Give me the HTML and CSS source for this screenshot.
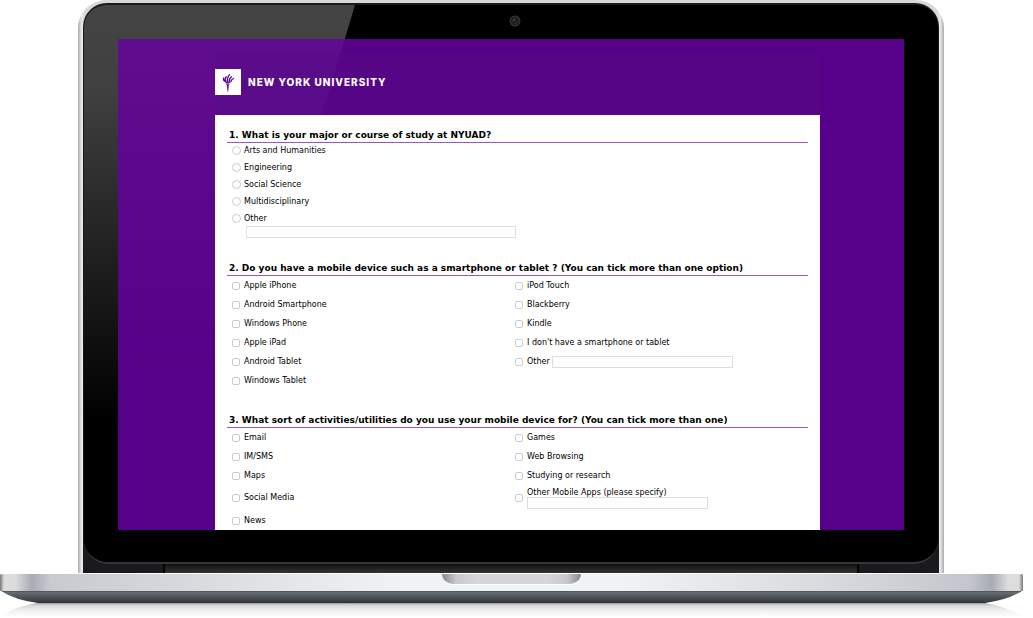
FILE: index.html
```html
<!DOCTYPE html>
<html lang="en">
<head>
<meta charset="utf-8">
<meta name="viewport" content="width=device-width, initial-scale=1">
<title>New York University survey</title>
<link rel="stylesheet" href="styles.css">
</head>
<body>
<div class="laptop">
  <div class="lid">
    <div class="shell">
      <div class="glass">
        <div class="camera-bar">
          <svg class="camera" viewBox="0 0 12 12" aria-hidden="true"><circle cx="6" cy="6" r="5.500" fill="#333"/><circle cx="6" cy="6" r="4" fill="#1c1c1e"/><circle cx="6" cy="6" r="2.600" fill="#2c3034"/><circle cx="6" cy="6" r="1.700" fill="#08080c"/><circle cx="5.300" cy="5.200" r=".8" fill="#5d7f96"/><circle cx="6.800" cy="7" r=".6" fill="#3a5568"/></svg>
        </div>
        <main class="screen">
          <form class="page">
            <header class="brand">
              <svg class="torch" viewBox="0 0 26 26" aria-hidden="true">
                <path fill="#fff" d="M0 0h26v26H0z"/>
                <path fill="#57068c" d="M11 14.500h3.600l-.4 1.200h-2.800zM11.800 16h2l-.6 6.500h-.7zM8.800 11.500q1.200 1.400 3.800 1.700 2.800 0 4.700-1.700-1.200 2.600-4.500 2.700-3-.1-4-2.700z"/>
                <g fill="none" stroke="#57068c" stroke-width="1.300" stroke-linecap="round"><path d="M9.300 12q-1.600-1.400-.6-3M11 12.500q-1.900-2.300.2-4.900M12.800 12.700q-1.300-3 1.700-7M14.500 12.500q-.7-2.500 2-4.700M16.200 12q-.1-1.400 2.200-2.500"/></g>
              </svg>
              <span class="wordmark">NEW YORK UNIVERSITY</span>
            </header>
            <div class="sheet">
              <fieldset class="question">
                <legend>1. What is your major or course of study at NYUAD?</legend>
                <div class="radios">
                  <label><input type="radio" name="major">Arts and Humanities</label>
                  <label><input type="radio" name="major">Engineering</label>
                  <label><input type="radio" name="major">Social Science</label>
                  <label><input type="radio" name="major">Multidisciplinary</label>
                  <label><input type="radio" name="major">Other</label>
                </div>
                <input class="text major-other" type="text" aria-label="Other major">
              </fieldset>
              <fieldset class="question">
                <legend>2. Do you have a mobile device such as a smartphone or tablet ? (You can tick more than one option)</legend>
                <div class="checks">
                  <label><input type="checkbox">Apple iPhone</label>
                  <label><input type="checkbox">iPod Touch</label>
                  <label><input type="checkbox">Android Smartphone</label>
                  <label><input type="checkbox">Blackberry</label>
                  <label><input type="checkbox">Windows Phone</label>
                  <label><input type="checkbox">Kindle</label>
                  <label><input type="checkbox">Apple iPad</label>
                  <label><input type="checkbox">I don't have a smartphone or tablet</label>
                  <label><input type="checkbox">Android Tablet</label>
                  <div class="inline-other"><label><input type="checkbox">Other</label><input class="text" type="text" aria-label="Other device"></div>
                  <label><input type="checkbox">Windows Tablet</label>
                </div>
              </fieldset>
              <fieldset class="question">
                <legend>3. What sort of activities/utilities do you use your mobile device for? (You can tick more than one)</legend>
                <div class="checks">
                  <label><input type="checkbox">Email</label>
                  <label><input type="checkbox">Games</label>
                  <label><input type="checkbox">IM/SMS</label>
                  <label><input type="checkbox">Web Browsing</label>
                  <label><input type="checkbox">Maps</label>
                  <label><input type="checkbox">Studying or research</label>
                  <label><input type="checkbox">Social Media</label>
                  <div class="stacked-other"><input type="checkbox" id="apps"><div class="stack"><label for="apps">Other Mobile Apps (please specify)</label><input class="text" type="text" aria-label="Other mobile apps"></div></div>
                  <label><input type="checkbox">News</label>
                </div>
              </fieldset>
            </div>
          </form>
        </main>
      </div>
      <div class="hinge"></div>
    </div>
  </div>
  <div class="base"><div class="notch"></div></div>
  <svg class="underside" viewBox="0 0 1023 45" preserveAspectRatio="none" aria-hidden="true">
    <defs>
      <linearGradient id="under" x2="0" y2="1"><stop offset="0" stop-color="#485155"/><stop offset=".15" stop-color="#667075"/><stop offset=".3" stop-color="#596167"/><stop offset=".85" stop-color="#3c3f45"/><stop offset="1" stop-color="#2c2e32"/></linearGradient>
      <linearGradient id="reflection" x2="0" y2="1"><stop offset="0" stop-color="#999"/><stop offset=".15" stop-color="#d6d6d6"/><stop offset=".5" stop-color="#efefef"/><stop offset="1" stop-color="#fff"/></linearGradient>
    </defs>
    <path fill="url(#reflection)" d="M38 12H985Q1008 16 1022 26H1Q12 16 38 12z"/>
    <path fill="url(#under)" d="M1 0H1022Q1008 9 985 12H38Q15 9 1 0z"/>
    <path fill="#2f3237" d="M346 12q5-3 10 0zM667 12q5-3 10 0z"/>
  </svg>
</div>
</body>
</html>
```
FILE: styles.css
```css
* { box-sizing: border-box; }
body {
  margin: 0;
  background: #fff;
  color: #000;
  font: 8px/12px Verdana, "DejaVu Sans", sans-serif;
  overflow: hidden;
}
.laptop { padding-right: 10px; }
.lid {
  margin: 0 79px 0 78px;
  padding: 3px 5px 0;
  border-radius: 28px 28px 0 0;
  background: linear-gradient(90deg, #aaa, #eee 4px, #d8d8da 6px, #d8d8da calc(100% - 6px), #eee calc(100% - 4px), #aaa);
}
.shell {
  padding: 2px 1px 0;
  border-radius: 24px 24px 0 0;
  background: #1a1a1c;
}
.glass {
  position: relative;
  padding: 1px 34px 32px;
  border-radius: 22px 22px 24px 24px;
  border-bottom: 2px solid #353535;
  background: #000;
}
.glass::before {
  content: "";
  position: absolute;
  inset: 0;
  border-radius: inherit;
  background: linear-gradient(#444, #404040 15%, #000 75%);
  clip-path: polygon(0 0, 271px 0, 105px 100%, 0 100%);
}
.camera-bar {
  position: relative;
  display: flex;
  justify-content: center;
  padding: 9px 0 12px 7px;
}
.camera { width: 12px; height: 12px; }
.screen {
  position: relative;
  padding: 13px 84px 0 97px;
  background: #570089;
}
.screen::before {
  content: "";
  position: absolute;
  inset: 0;
  background: linear-gradient(rgba(255, 255, 255, .05), rgba(255, 255, 255, 0) 70%);
  clip-path: polygon(0 0, 227px 0, 79px 100%, 0 100%);
}
.page { position: relative; }
.brand {
  display: flex;
  align-items: center;
  gap: 7px;
  height: 63px;
  padding-bottom: 3px;
  background: rgba(84, 12, 132, .4);
}
.torch { width: 26px; height: 26px; }
.wordmark {
  color: #fff;
  font: 800 10px/12px Inter, sans-serif;
  letter-spacing: 1px;
}
.sheet {
  display: flex;
  flex-direction: column;
  gap: 24px;
  padding: 14px 12px 0;
  background: #fff;
}
.question { min-width: 0; margin: 0; padding: 0; border: 0; }
legend {
  width: 100%;
  padding: 0 2px;
  border-bottom: 1px solid #9a55c8;
  font-weight: 700;
  font-size: 9px;
  line-height: 13px;
  white-space: nowrap;
}
label { display: flex; align-items: center; }
.radios { display: grid; grid-auto-rows: 15px; gap: 2px; }
.checks {
  display: grid;
  grid-template-columns: 283px 1fr;
  grid-auto-rows: minmax(19px, auto);
  align-items: center;
}
input[type="radio"], input[type="checkbox"] {
  flex: none;
  appearance: none;
  width: 8px;
  height: 8px;
  margin: 0 4px 0 5px;
  border: 1px solid #ccc;
  border-radius: 2px;
  background: #fff;
}
input[type="radio"] { width: 9px; height: 9px; margin-right: 3px; border-radius: 50%; }
.text {
  width: 181px;
  height: 12px;
  padding: 0 2px;
  border: 1px solid #ddd;
  background: #fff;
  font: inherit;
}
.major-other { display: block; width: 270px; margin-left: 19px; }
.inline-other, .stacked-other { display: flex; align-items: center; }
.inline-other { gap: 2px; }
.stack { display: grid; padding: 4px 0 2px; }
.stack label { line-height: 8px; }
.hinge {
  height: 9px;
  margin: 0 79px;
  border: solid #000;
  border-width: 0 2px;
  background: linear-gradient(#111, #333);
}
.base {
  height: 18px;
  border-top: 1px solid #fff;
  border-radius: 2px 2px 0 0;
  background: linear-gradient(90deg, #777, #ddd 4px, #ddd 15px, #a7abb4 32px, #c9cad0 50px, #d6d7dc 170px, #f0f3f3 400px, #f0f3f3 620px, #d6d7dc 850px, #c5c6cd 970px, #a7abb4 992px, #ddd 1008px, #ddd 1019px, #777);
}
.notch {
  width: 139px;
  height: 11px;
  margin: 0 auto;
  border-bottom: 1px solid #fff;
  border-radius: 0 0 12px 12px;
  background: linear-gradient(90deg, #88888c, #c8c8cd 10%, #d5d5da 25%, #d5d5da 75%, #c8c8cd 90%, #88888c);
}
.underside { display: block; width: 100%; height: 45px; }
```
